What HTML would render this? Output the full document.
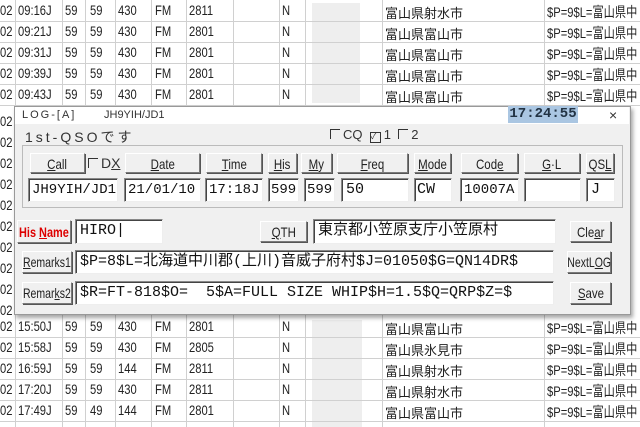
<!DOCTYPE html>
<html><head><meta charset="utf-8"><style>
body{margin:0;width:640px;height:427px;overflow:hidden;background:#fff;font-family:"Liberation Sans","Noto Sans CJK JP",sans-serif;position:relative}
.a{position:absolute;white-space:nowrap}
.row{position:absolute;left:0;width:640px;height:21px;border-bottom:1px solid #d0d0d0;font-size:14px;color:#222;white-space:nowrap}
.row span{position:absolute;top:2px;transform:scaleX(.8);transform-origin:left;white-space:nowrap}
.row span.j{transform:none;font-size:13px;top:3px}
.vl{position:absolute;top:0;bottom:0;width:1px;background:#d0d0d0}
.blur{position:absolute;background:#eeeeee}
.btn{position:absolute;background:#f0f0f0;border:1px solid;border-color:#fff #7a7a7a #7a7a7a #fff;box-shadow:1px 1px 0 #555;font-size:14px;text-align:center;line-height:20px;color:#222;box-sizing:border-box;white-space:nowrap;display:flex;justify-content:center}
.btn i{font-style:normal;display:inline-block;transform:scaleX(.82);flex:none}
.in{position:absolute;background:#fff;border:1px solid;border-color:#888 #eee #eee #888;box-shadow:inset 1px 1px 0 #444;box-sizing:border-box;font-size:15px;line-height:22px;padding-left:4px;color:#111;font-family:"Liberation Mono","Noto Sans CJK JP",monospace;white-space:nowrap;overflow:hidden}
.cb{display:inline-block;width:9px;height:9px;border-left:1px solid #333;border-top:1px solid #333;margin-right:3px;vertical-align:0}
</style></head><body>
<div class="vl" style="left:15px"></div><div class="vl" style="left:62px"></div><div class="vl" style="left:85px"></div><div class="vl" style="left:115px"></div><div class="vl" style="left:151px"></div><div class="vl" style="left:186px"></div><div class="vl" style="left:233px"></div><div class="vl" style="left:279px"></div><div class="vl" style="left:305px"></div><div class="vl" style="left:382px"></div><div class="vl" style="left:544px"></div>
<div class="blur" style="left:312px;top:3px;width:48px;height:100px"></div>
<div class="blur" style="left:312px;top:320px;width:50px;height:107px"></div>
<div class="row" style="top:0"><span style="left:0">02</span><span style="left:18px">09:16J</span><span style="left:65px">59</span><span style="left:90px">59</span><span style="left:118px">430</span><span style="left:155px">FM</span><span style="left:189px">2811</span><span style="left:282px">N</span><span class="j" style="left:385px">富山県射水市</span><span style="left:547px">$P=9$L=富山県中</span></div>
<div class="row" style="top:21px"><span style="left:0">02</span><span style="left:18px">09:21J</span><span style="left:65px">59</span><span style="left:90px">59</span><span style="left:118px">430</span><span style="left:155px">FM</span><span style="left:189px">2801</span><span style="left:282px">N</span><span class="j" style="left:385px">富山県富山市</span><span style="left:547px">$P=9$L=富山県中</span></div>
<div class="row" style="top:42px"><span style="left:0">02</span><span style="left:18px">09:31J</span><span style="left:65px">59</span><span style="left:90px">59</span><span style="left:118px">430</span><span style="left:155px">FM</span><span style="left:189px">2801</span><span style="left:282px">N</span><span class="j" style="left:385px">富山県富山市</span><span style="left:547px">$P=9$L=富山県中</span></div>
<div class="row" style="top:63px"><span style="left:0">02</span><span style="left:18px">09:39J</span><span style="left:65px">59</span><span style="left:90px">59</span><span style="left:118px">430</span><span style="left:155px">FM</span><span style="left:189px">2801</span><span style="left:282px">N</span><span class="j" style="left:385px">富山県富山市</span><span style="left:547px">$P=9$L=富山県中</span></div>
<div class="row" style="top:84px"><span style="left:0">02</span><span style="left:18px">09:43J</span><span style="left:65px">59</span><span style="left:90px">59</span><span style="left:118px">430</span><span style="left:155px">FM</span><span style="left:189px">2801</span><span style="left:282px">N</span><span class="j" style="left:385px">富山県富山市</span><span style="left:547px">$P=9$L=富山県中</span></div>
<div class="row" style="top:316px"><span style="left:0">02</span><span style="left:18px">15:50J</span><span style="left:65px">59</span><span style="left:90px">59</span><span style="left:118px">430</span><span style="left:155px">FM</span><span style="left:189px">2801</span><span style="left:282px">N</span><span class="j" style="left:385px">富山県富山市</span><span style="left:547px">$P=9$L=富山県中</span></div>
<div class="row" style="top:337px"><span style="left:0">02</span><span style="left:18px">15:58J</span><span style="left:65px">59</span><span style="left:90px">59</span><span style="left:118px">430</span><span style="left:155px">FM</span><span style="left:189px">2805</span><span style="left:282px">N</span><span class="j" style="left:385px">富山県氷見市</span><span style="left:547px">$P=9$L=富山県中</span></div>
<div class="row" style="top:358px"><span style="left:0">02</span><span style="left:18px">16:59J</span><span style="left:65px">59</span><span style="left:90px">59</span><span style="left:118px">144</span><span style="left:155px">FM</span><span style="left:189px">2811</span><span style="left:282px">N</span><span class="j" style="left:385px">富山県射水市</span><span style="left:547px">$P=9$L=富山県中</span></div>
<div class="row" style="top:379px"><span style="left:0">02</span><span style="left:18px">17:20J</span><span style="left:65px">59</span><span style="left:90px">59</span><span style="left:118px">430</span><span style="left:155px">FM</span><span style="left:189px">2811</span><span style="left:282px">N</span><span class="j" style="left:385px">富山県射水市</span><span style="left:547px">$P=9$L=富山県中</span></div>
<div class="row" style="top:400px"><span style="left:0">02</span><span style="left:18px">17:49J</span><span style="left:65px">59</span><span style="left:90px">49</span><span style="left:118px">144</span><span style="left:155px">FM</span><span style="left:189px">2801</span><span style="left:282px">N</span><span class="j" style="left:385px">富山県富山市</span><span style="left:547px">$P=9$L=富山県中</span></div>
<div class="row" style="top:105px;height:211px;border:0;background:transparent"><span style="left:0;top:8px">02</span><span style="left:0;top:29px">02</span><span style="left:0;top:50px">02</span><span style="left:0;top:71px">02</span><span style="left:0;top:92px">02</span><span style="left:0;top:113px">02</span><span style="left:0;top:134px">02</span><span style="left:0;top:155px">02</span><span style="left:0;top:176px">02</span><span style="left:0;top:197px">02</span></div>

<div class="a" style="left:14px;top:106px;width:615px;height:207px;background:#f0f0f0;border:1px solid #999;box-shadow:2px 3px 4px rgba(0,0,0,.35)"></div>
<div class="a" style="left:15px;top:107px;width:614px;height:17px;background:#fff"></div>
<div class="a" style="left:22px;top:109px;font-size:11px;letter-spacing:2px;color:#333">LOG-[A]</div>
<div class="a" style="left:104px;top:109px;font-size:11px;color:#333">JH9YIH/JD1</div>
<div class="a" style="left:508px;top:106px;width:70px;height:17px;background:#aac6e2;font-size:14px;font-weight:bold;color:#234;text-align:center;line-height:17px;font-family:'Liberation Mono',monospace">17:24:55</div>
<div class="a" style="left:609px;top:107px;font-size:14px;color:#333">×</div>
<div class="a" style="left:25px;top:127px;font-size:14px;color:#333;letter-spacing:3px">1st-QSOです</div>
<div class="a" style="left:330px;top:127px;font-size:13px;color:#333"><span class="cb"></span>CQ &nbsp;<span class="cb" style="border:1px solid #333;font-size:8px;line-height:8px">✓</span>1 &nbsp;<span class="cb"></span>2</div>
<div class="a" style="left:22px;top:145px;width:601px;height:63px;border:1px solid #bbb;box-sizing:border-box"></div>

<div class="btn" style="left:30px;top:153px;width:55px;height:20px"><i><u>C</u>all</i></div>
<div class="a" style="left:88px;top:155px;font-size:14px;color:#333"><span class="cb"></span>D<u>X</u></div>
<div class="btn" style="left:125px;top:153px;width:75px;height:20px"><i><u>D</u>ate</i></div>
<div class="btn" style="left:206px;top:153px;width:56px;height:20px"><i><u>T</u>ime</i></div>
<div class="btn" style="left:268px;top:153px;width:29px;height:20px"><i><u>H</u>is</i></div>
<div class="btn" style="left:301px;top:153px;width:31px;height:20px"><i><u>M</u>y</i></div>
<div class="btn" style="left:337px;top:153px;width:71px;height:20px"><i><u>F</u>req</i></div>
<div class="btn" style="left:414px;top:153px;width:37px;height:20px"><i><u>M</u>ode</i></div>
<div class="btn" style="left:461px;top:153px;width:57px;height:20px"><i>Cod<u>e</u></i></div>
<div class="btn" style="left:524px;top:153px;width:56px;height:20px"><i><u>G</u>·L</i></div>
<div class="btn" style="left:586px;top:153px;width:28px;height:20px"><i>QS<u>L</u></i></div>

<div class="in" style="left:28px;top:178px;width:90px;height:24px;font-size:14px;padding-left:3px">JH9YIH/JD1</div>
<div class="in" style="left:124px;top:178px;width:77px;height:24px;font-size:14px;padding-left:3px">21/01/10</div>
<div class="in" style="left:205px;top:178px;width:58px;height:24px;font-size:14px;padding-left:3px">17:18J</div>
<div class="in" style="left:268px;top:178px;width:31px;height:24px;padding-left:2px;font-size:14px">599</div>
<div class="in" style="left:304px;top:178px;width:31px;height:24px;padding-left:2px;font-size:14px">599</div>
<div class="in" style="left:341px;top:178px;width:68px;height:24px">50</div>
<div class="in" style="left:414px;top:178px;width:38px;height:24px;padding-left:2px">CW</div>
<div class="in" style="left:460px;top:178px;width:59px;height:24px;font-size:14px;padding-left:3px">10007A</div>
<div class="in" style="left:524px;top:178px;width:57px;height:24px"></div>
<div class="in" style="left:586px;top:178px;width:29px;height:24px">J</div>

<div class="btn" style="left:17px;top:220px;width:54px;height:23px;line-height:22px;color:#d00;font-weight:bold"><i style="transform:scaleX(.78)">His <u>N</u>ame</i></div>
<div class="in" style="left:75px;top:219px;width:88px;height:25px">HIRO|</div>
<div class="btn" style="left:260px;top:221px;width:47px;height:21px"><i><u>Q</u>TH</i></div>
<div class="in" style="left:313px;top:219px;width:243px;height:25px">東京都小笠原支庁小笠原村</div>
<div class="btn" style="left:570px;top:221px;width:41px;height:21px"><i>Cle<u>a</u>r</i></div>

<div class="btn" style="left:22px;top:251px;width:50px;height:22px"><i style="transform:scaleX(.75)"><u>R</u>emarks1</i></div>
<div class="in" style="left:75px;top:250px;width:479px;height:24px">$P=8$L=北海道中川郡(上川)音威子府村$J=01050$G=QN14DR$</div>
<div class="btn" style="left:567px;top:251px;width:44px;height:22px"><i style="transform:scaleX(.75)">NextL<u>O</u>G</i></div>

<div class="btn" style="left:22px;top:282px;width:50px;height:22px"><i style="transform:scaleX(.75)">Remar<u>k</u>s2</i></div>
<div class="in" style="left:75px;top:281px;width:479px;height:24px">$R=FT-818$O=&nbsp;&nbsp;5$A=FULL SIZE WHIP$H=1.5$Q=QRP$Z=$</div>
<div class="btn" style="left:570px;top:282px;width:41px;height:22px"><i><u>S</u>ave</i></div>
</body></html>
